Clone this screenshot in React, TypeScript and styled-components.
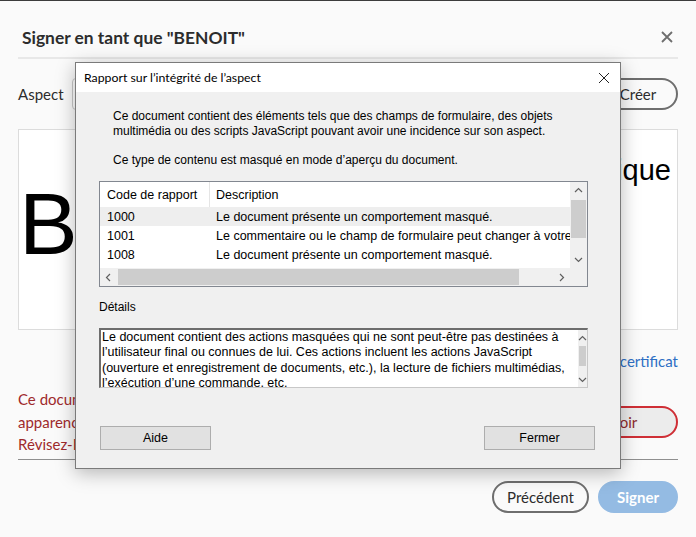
import React from "react";
import styled, { createGlobalStyle } from "styled-components";

const GlobalStyle = createGlobalStyle`
  html, body {
    margin: 0;
    padding: 0;
    background: #fafafa;
  }
  body {
    font-family: Lato, "Open Sans", sans-serif;
  }
`;

const Page = styled.div`
  position: relative;
  width: 696px;
  height: 537px;
  box-sizing: border-box;
  border-top: 1px solid #3c3c3c;
  padding: 0 18px;
  background: #fafafa;
  overflow: hidden;
  color: #2c2c2c;
`;

const Header = styled.div`
  display: flex;
  align-items: center;
  justify-content: space-between;
  height: 40px;
  margin-top: 16px;
  padding: 0 5px 0 4px;
  border-bottom: 2px solid #e8e8e8;
`;

const Title = styled.h1`
  margin: 0;
  font-size: 17.4px;
  font-weight: 700;
  color: #2c2c2c;
`;

const AspectRow = styled.div`
  display: flex;
  align-items: center;
  gap: 9px;
  height: 32px;
  margin-top: 19px;
`;

const Label = styled.span`
  font-size: 15px;
  width: 45px;
  color: #2c2c2c;
`;

const SelectBox = styled.div`
  flex: 1;
  height: 32px;
  box-sizing: border-box;
  border: 1px solid #c8c8c8;
  border-radius: 4px;
  background: #fff;
`;

const PillButton = styled.button<{ $width: number; $tone?: "default" | "danger" | "primary" }>`
  width: ${(p) => p.$width}px;
  height: 32px;
  box-sizing: border-box;
  border-radius: 16px;
  font-family: Lato, "Open Sans", sans-serif;
  font-size: 15px;
  padding: 0;
  border: 2px solid
    ${(p) => (p.$tone === "danger" ? "#cf2f36" : p.$tone === "primary" ? "#94bbe3" : "#6e6e6e")};
  background: ${(p) => (p.$tone === "danger" ? "#ececec" : p.$tone === "primary" ? "#94bbe3" : "transparent")};
  color: ${(p) => (p.$tone === "danger" ? "#8e2a2b" : p.$tone === "primary" ? "#fff" : "#2c2c2c")};
  font-weight: ${(p) => (p.$tone === "primary" ? 700 : 400)};
`;

const Preview = styled.div`
  display: flex;
  height: 201px;
  margin-top: 19px;
  box-sizing: border-box;
  border: 1px solid #dcdcdc;
  background: #fff;
  font-family: "Liberation Sans", Arial, sans-serif;
  color: #000;
`;

const BigName = styled.div`
  font-size: 88px;
  line-height: 1;
  margin-top: 50px;
`;

const SignatureInfo = styled.div`
  margin-left: auto;
  margin-top: 24px;
  padding-right: 6px;
  font-size: 29px;
`;

const LinkRow = styled.div`
  margin-top: 21px;
  text-align: right;
  font-size: 15px;
  line-height: 20px;
  color: #2d6fc4;
`;

const WarningRow = styled.div`
  display: flex;
  align-items: center;
  margin-top: 17px;
`;

const WarningText = styled.p`
  flex: 1;
  margin: 0;
  font-size: 15px;
  line-height: 22.5px;
  color: #9f2a2c;
`;

const Divider = styled.div`
  margin-top: 3px;
  border-top: 1px solid #8f8f8f;
`;

const Footer = styled.div`
  display: flex;
  justify-content: flex-end;
  gap: 9px;
  margin-top: 21px;
`;

/* ---- modal dialog ---- */

const Dialog = styled.div`
  position: absolute;
  left: 75px;
  top: 61px;
  width: 546px;
  height: 407px;
  box-sizing: border-box;
  border: 1px solid #7a7a7a;
  background: #f0f0f0;
  box-shadow: 0 4px 18px rgba(0, 0, 0, 0.28);
  display: flex;
  flex-direction: column;
  font-family: "Liberation Sans", Arial, sans-serif;
  font-size: 12px;
  color: #000;
`;

const TitleBar = styled.div`
  display: flex;
  align-items: center;
  justify-content: space-between;
  height: 29px;
  flex-shrink: 0;
  padding: 0 10px 0 8px;
  background: #fff;
  font-family: Lato, "Noto Sans", sans-serif;
  font-size: 12.3px;
`;

const Body = styled.div`
  flex: 1;
  display: flex;
  flex-direction: column;
  padding: 17px 24px 0 23px;
`;

const Para = styled.p<{ $gap?: number }>`
  margin: ${(p) => p.$gap ?? 0}px 0 0 14px;
  line-height: 15px;
`;

const ListBox = styled.div`
  display: grid;
  grid-template-columns: 1fr 17px;
  grid-template-rows: 86px 18px;
  width: 489px;
  height: 106px;
  box-sizing: border-box;
  margin-top: 13px;
  border: 1px solid #828790;
  background: #fff;
  font-size: 12.5px;
`;

const ListContent = styled.div`
  overflow: hidden;
`;

const ListRow = styled.div<{ $head?: boolean; $hover?: boolean }>`
  display: flex;
  height: ${(p) => (p.$head ? 25 : 19)}px;
  align-items: center;
  background: ${(p) => (p.$hover ? "#eeeeee" : "transparent")};
  white-space: nowrap;
`;

const CodeCell = styled.div<{ $head?: boolean }>`
  width: 110px;
  flex-shrink: 0;
  box-sizing: border-box;
  padding-left: 7px;
  align-self: stretch;
  display: flex;
  align-items: center;
  border-right: ${(p) => (p.$head ? "1px solid #e5e5e5" : "none")};
`;

const DescCell = styled.div`
  padding-left: 6px;
`;

const ScrollTrack = styled.div<{ $vertical?: boolean }>`
  display: flex;
  flex-direction: ${(p) => (p.$vertical ? "column" : "row")};
  background: #f0f0f0;
`;

const ArrowBox = styled.div<{ $size: number; $vertical?: boolean }>`
  display: flex;
  align-items: center;
  justify-content: center;
  flex-shrink: 0;
  ${(p) => (p.$vertical ? `height: ${p.$size}px;` : `width: ${p.$size}px;`)}
`;

const Thumb = styled.div<{ $vertical?: boolean; $offset: number; $length: number }>`
  background: #cdcdcd;
  ${(p) =>
    p.$vertical
      ? `margin: ${p.$offset}px 1px 0 1px; height: ${p.$length}px;`
      : `margin: 1px 0 1px ${p.$offset}px; width: ${p.$length}px;`}
`;

const Spacer = styled.div`
  flex: 1;
`;

const Corner = styled.div`
  background: #f0f0f0;
`;

const SectionLabel = styled.div`
  margin-top: 13px;
  line-height: 15px;
`;

const DetailsBox = styled.div`
  display: flex;
  width: 489px;
  height: 60px;
  box-sizing: border-box;
  margin-top: 13px;
  border: 1px solid #c8c8c8;
  border-top: 2px solid #6d6d6d;
  border-left: 2px solid #6d6d6d;
  background: #fff;
  font-size: 12.5px;
`;

const DetailsText = styled.div`
  flex: 1;
  overflow: hidden;
  padding: 0 1px;
  line-height: 15.3px;
  white-space: nowrap;
`;

const ButtonRow = styled.div`
  display: flex;
  justify-content: space-between;
  margin: 38px 1px 0 1px;
`;

const WinButton = styled.button`
  width: 111px;
  height: 24px;
  box-sizing: border-box;
  border: 1px solid #adadad;
  background: #e1e1e1;
  font-family: "Liberation Sans", Arial, sans-serif;
  font-size: 12.5px;
  color: #000;
  padding: 0;
`;

type Dir = "up" | "down" | "left" | "right";

const Chevron: React.FC<{ dir: Dir }> = ({ dir }) => {
  const rot = { up: 0, right: 90, down: 180, left: 270 }[dir];
  return (
    <svg width="9" height="9" viewBox="0 0 9 9" style={{ transform: `rotate(${rot}deg)` }}>
      <path d="M1 6 L4.5 2.5 L8 6" fill="none" stroke="#606060" strokeWidth="1.2" />
    </svg>
  );
};

const CloseIcon: React.FC<{ size: number; stroke: string; width: number }> = ({ size, stroke, width }) => (
  <svg width={size} height={size} viewBox="0 0 12 12">
    <path d="M1 1 L11 11 M11 1 L1 11" stroke={stroke} strokeWidth={width} fill="none" />
  </svg>
);

const reports = [
  { code: "1000", desc: "Le document présente un comportement masqué." },
  { code: "1001", desc: "Le commentaire ou le champ de formulaire peut changer à votre insu." },
  { code: "1008", desc: "Le document présente un comportement masqué." },
];

const IntegrityDialog: React.FC = () => (
  <Dialog>
    <TitleBar>
      <span>Rapport sur l’intégrité de l’aspect</span>
      <CloseIcon size={12} stroke="#222" width={1} />
    </TitleBar>
    <Body>
      <Para>
        Ce document contient des éléments tels que des champs de formulaire, des objets
        <br />
        multimédia ou des scripts JavaScript pouvant avoir une incidence sur son aspect.
      </Para>
      <Para $gap={14}>Ce type de contenu est masqué en mode d’aperçu du document.</Para>
      <ListBox>
        <ListContent>
          <ListRow $head>
            <CodeCell $head>Code de rapport</CodeCell>
            <DescCell>Description</DescCell>
          </ListRow>
          {reports.map((r, i) => (
            <ListRow key={r.code} $hover={i === 0}>
              <CodeCell>{r.code}</CodeCell>
              <DescCell>{r.desc}</DescCell>
            </ListRow>
          ))}
        </ListContent>
        <ScrollTrack $vertical>
          <ArrowBox $vertical $size={17}>
            <Chevron dir="up" />
          </ArrowBox>
          <Thumb $vertical $offset={1} $length={38} />
          <Spacer />
          <ArrowBox $vertical $size={17}>
            <Chevron dir="down" />
          </ArrowBox>
        </ScrollTrack>
        <ScrollTrack>
          <ArrowBox $size={17}>
            <Chevron dir="left" />
          </ArrowBox>
          <Thumb $offset={1} $length={401} />
          <Spacer />
          <ArrowBox $size={17}>
            <Chevron dir="right" />
          </ArrowBox>
        </ScrollTrack>
        <Corner />
      </ListBox>
      <SectionLabel>Détails</SectionLabel>
      <DetailsBox>
        <DetailsText>
          Le document contient des actions masquées qui ne sont peut-être pas destinées à
          <br />
          l’utilisateur final ou connues de lui. Ces actions incluent les actions JavaScript
          <br />
          (ouverture et enregistrement de documents, etc.), la lecture de fichiers multimédias,
          <br />
          l’exécution d’une commande, etc.
        </DetailsText>
        <ScrollTrack $vertical>
          <ArrowBox $vertical $size={16}>
            <Chevron dir="up" />
          </ArrowBox>
          <Thumb $vertical $offset={0} $length={20} />
          <Spacer />
          <ArrowBox $vertical $size={16}>
            <Chevron dir="down" />
          </ArrowBox>
        </ScrollTrack>
      </DetailsBox>
      <ButtonRow>
        <WinButton>Aide</WinButton>
        <WinButton>Fermer</WinButton>
      </ButtonRow>
    </Body>
  </Dialog>
);

const App: React.FC = () => (
  <>
    <GlobalStyle />
    <Page>
      <Header>
        <Title>Signer en tant que "BENOIT"</Title>
        <CloseIcon size={12} stroke="#6e6e6e" width={1.8} />
      </Header>
      <AspectRow>
        <Label>Aspect</Label>
        <SelectBox />
        <PillButton $width={80}>Créer</PillButton>
      </AspectRow>
      <Preview>
        <BigName>B</BigName>
        <SignatureInfo>Signature numérique</SignatureInfo>
      </Preview>
      <LinkRow>Afficher les détails du certificat</LinkRow>
      <WarningRow>
        <WarningText>
          Ce document contient du contenu dynamique pouvant modifier son
          <br />
          apparence après la signature.
          <br />
          Révisez-Le avant de signer.
        </WarningText>
        <PillButton $width={108} $tone="danger">
          Voir
        </PillButton>
      </WarningRow>
      <Divider />
      <Footer>
        <PillButton $width={97}>Précédent</PillButton>
        <PillButton $width={80} $tone="primary">
          Signer
        </PillButton>
      </Footer>
      <IntegrityDialog />
    </Page>
  </>
);

export default App;
